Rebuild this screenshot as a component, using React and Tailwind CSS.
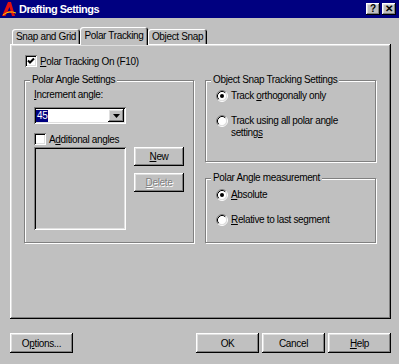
import React from "react";

// classic win32 bevels
const raised =
  "shadow-[inset_-1px_-1px_0_#000,inset_1px_1px_0_#fff,inset_-2px_-2px_0_#808080,inset_2px_2px_0_#dfdfdf]";
const sunken =
  "shadow-[inset_1px_1px_0_#808080,inset_-1px_-1px_0_#fff,inset_2px_2px_0_#000,inset_-2px_-2px_0_#dfdfdf]";
const etched = "border border-[#808080] shadow-[inset_1px_1px_0_#fff,1px_1px_0_#fff]";

const AcadIcon = () => (
  <svg width="16" height="16" viewBox="0 0 16 16" className="shrink-0">
    <path d="M1 15 L7 1 L10 1 L14 15 L11 15 L8.5 6 L4.5 15 Z" fill="#e01010" />
    <path d="M5 11 L11 11" stroke="#e01010" strokeWidth="1.5" />
    <path d="M2 14 Q8 9 15 12" stroke="#ffd000" strokeWidth="1" fill="none" />
  </svg>
);

const TitleButton = ({ children }) => (
  <div
    className={`w-[14px] h-[12px] bg-[#c0c0c0] ${raised} flex items-center justify-center text-[10px] font-bold leading-none text-black tracking-normal`}
  >
    {children}
  </div>
);

const Check = ({ checked }) => (
  <span className={`w-[12px] h-[12px] bg-white shrink-0 ${sunken} flex items-center justify-center`}>
    {checked && (
      <svg width="8" height="8" viewBox="0 0 8 8">
        <polyline points="1,3.5 3,5.5 7,1.5" stroke="#000" strokeWidth="2" fill="none" />
      </svg>
    )}
  </span>
);

const Radio = ({ checked }) => (
  <svg width="12" height="12" viewBox="0 0 12 12" className="shrink-0">
    <circle cx="6" cy="6" r="4.5" fill="#fff" />
    <path d="M2.11 9.89 A5.5 5.5 0 0 1 9.89 2.11" stroke="#808080" fill="none" />
    <path d="M9.89 2.11 A5.5 5.5 0 0 1 2.11 9.89" stroke="#fff" fill="none" />
    <path d="M2.82 9.18 A4.5 4.5 0 0 1 9.18 2.82" stroke="#000" fill="none" />
    <path d="M9.18 2.82 A4.5 4.5 0 0 1 2.82 9.18" stroke="#dfdfdf" fill="none" />
    {checked && <circle cx="6" cy="6" r="2" fill="#000" />}
  </svg>
);

const Button = ({ children, className = "", disabled }) => (
  <div className={`h-[19px] flex items-center justify-center bg-[#c0c0c0] ${raised} ${className}`}>
    <span className={disabled ? "text-[#808080] [text-shadow:1px_1px_0_#fff]" : ""}>{children}</span>
  </div>
);

const Group = ({ title, className = "", children }) => (
  <div className={`relative ${etched} ${className}`}>
    <span className="absolute -top-[7px] left-[5px] px-[2px] bg-[#c0c0c0] leading-[12px]">{title}</span>
    {children}
  </div>
);

const Tab = ({ active, className = "", children }) => (
  <div
    className={`${className} ${
      active ? "h-[18px] -mb-[1px] z-10 pb-[1px]" : "h-[15px]"
    } relative bg-[#c0c0c0] rounded-t-[3px] flex items-center justify-center shadow-[inset_1px_1px_0_#fff,inset_-1px_0_0_#000,inset_-2px_0_0_#808080]`}
  >
    {children}
  </div>
);

const RadioRow = ({ checked, className = "", children }) => (
  <div className={`flex items-start gap-[3px] ${className}`}>
    <Radio checked={checked} />
    <span className="leading-[12px]">{children}</span>
  </div>
);

export default function App() {
  return (
    <div className="w-[399px] h-[364px] bg-[#c0c0c0] text-[10px] tracking-[-0.35px] whitespace-nowrap text-black font-['Liberation_Sans',Arial,sans-serif] flex flex-col overflow-hidden select-none">
      {/* title bar */}
      <div className="h-[18px] bg-[#000080] flex items-center pl-[1px] pr-[3px]">
        <AcadIcon />
        <span className="ml-[2px] text-white font-bold text-[11px] tracking-[-0.5px] leading-none">
          Drafting Settings
        </span>
        <div className="ml-auto flex gap-[2px]">
          <TitleButton>?</TitleButton>
          <TitleButton>✕</TitleButton>
        </div>
      </div>

      <div className="flex flex-col pl-[10px] pr-[8px] pt-[9px]">
        {/* tabs */}
        <div className="flex items-end h-[17px] pl-[2px]">
          <Tab className="w-[68px]">Snap and Grid</Tab>
          <Tab active className="w-[68px]">
            Polar Tracking
          </Tab>
          <Tab className="w-[59px]">Object Snap</Tab>
        </div>

        {/* tab page */}
        <div className={`h-[275px] w-[381px] bg-[#c0c0c0] ${raised} pl-[14px] pt-[11px] flex flex-col`}>
          <div className="flex items-center gap-[3px] ml-[1px] h-[12px]">
            <Check checked />
            <span>
              <u>P</u>olar Tracking On (F10)
            </span>
          </div>

          <div className="flex mt-[13px] gap-[11px]">
            {/* left column */}
            <Group title="Polar Angle Settings" className="w-[170px] h-[163px]">
              <div className="flex flex-col pl-[9px] pt-[8px]">
                <span className="leading-[12px]">
                  <u>I</u>ncrement angle:
                </span>
                <div className={`mt-[6px] w-[92px] h-[17px] bg-white ${sunken} flex items-center pl-[2px] pr-[2px]`}>
                  <span className="bg-[#000080] text-white px-[1px] leading-[12px]">45</span>
                  <div className={`ml-auto w-[16px] h-[13px] bg-[#c0c0c0] ${raised} flex items-center justify-center`}>
                    <svg width="7" height="4" viewBox="0 0 7 4">
                      <path d="M0 0 H7 L3.5 4 Z" fill="#000" />
                    </svg>
                  </div>
                </div>
                <div className="mt-[9px] flex items-center gap-[3px] h-[12px]">
                  <Check />
                  <span>
                    A<u>d</u>ditional angles
                  </span>
                </div>
                <div className="mt-[2px] flex items-start gap-[8px]">
                  <div className={`w-[92px] h-[83px] bg-[#c0c0c0] ${sunken}`} />
                  <div className="flex flex-col gap-[7px]">
                    <Button className="w-[50px]">
                      <u>N</u>ew
                    </Button>
                    <Button className="w-[50px]" disabled>
                      <u>D</u>elete
                    </Button>
                  </div>
                </div>
              </div>
            </Group>

            {/* right column */}
            <div className="flex flex-col">
              <Group title="Object Snap Tracking Settings" className="w-[171px] h-[82px]">
                <div className="flex flex-col pl-[10px] pt-[9px]">
                  <RadioRow checked>
                    Track <u>o</u>rthogonally only
                  </RadioRow>
                  <RadioRow className="mt-[13px]">
                    Track using all polar angle
                    <br />
                    setting<u>s</u>
                  </RadioRow>
                </div>
              </Group>
              <Group title="Polar Angle measurement" className="w-[171px] h-[65px] mt-[16px]">
                <div className="flex flex-col pl-[10px] pt-[10px]">
                  <RadioRow checked>
                    <u>A</u>bsolute
                  </RadioRow>
                  <RadioRow className="mt-[13px]">
                    <u>R</u>elative to last segment
                  </RadioRow>
                </div>
              </Group>
            </div>
          </div>
        </div>

        {/* dialog buttons */}
        <div className="flex mt-[14px] gap-[3px]">
          <Button className="w-[63px] h-[20px]">
            O<u>p</u>tions...
          </Button>
          <div className="flex-1" />
          <Button className="w-[63px] h-[20px]">OK</Button>
          <Button className="w-[63px] h-[20px]">Cancel</Button>
          <Button className="w-[63px] h-[20px]">
            <u>H</u>elp
          </Button>
        </div>
      </div>
    </div>
  );
}
